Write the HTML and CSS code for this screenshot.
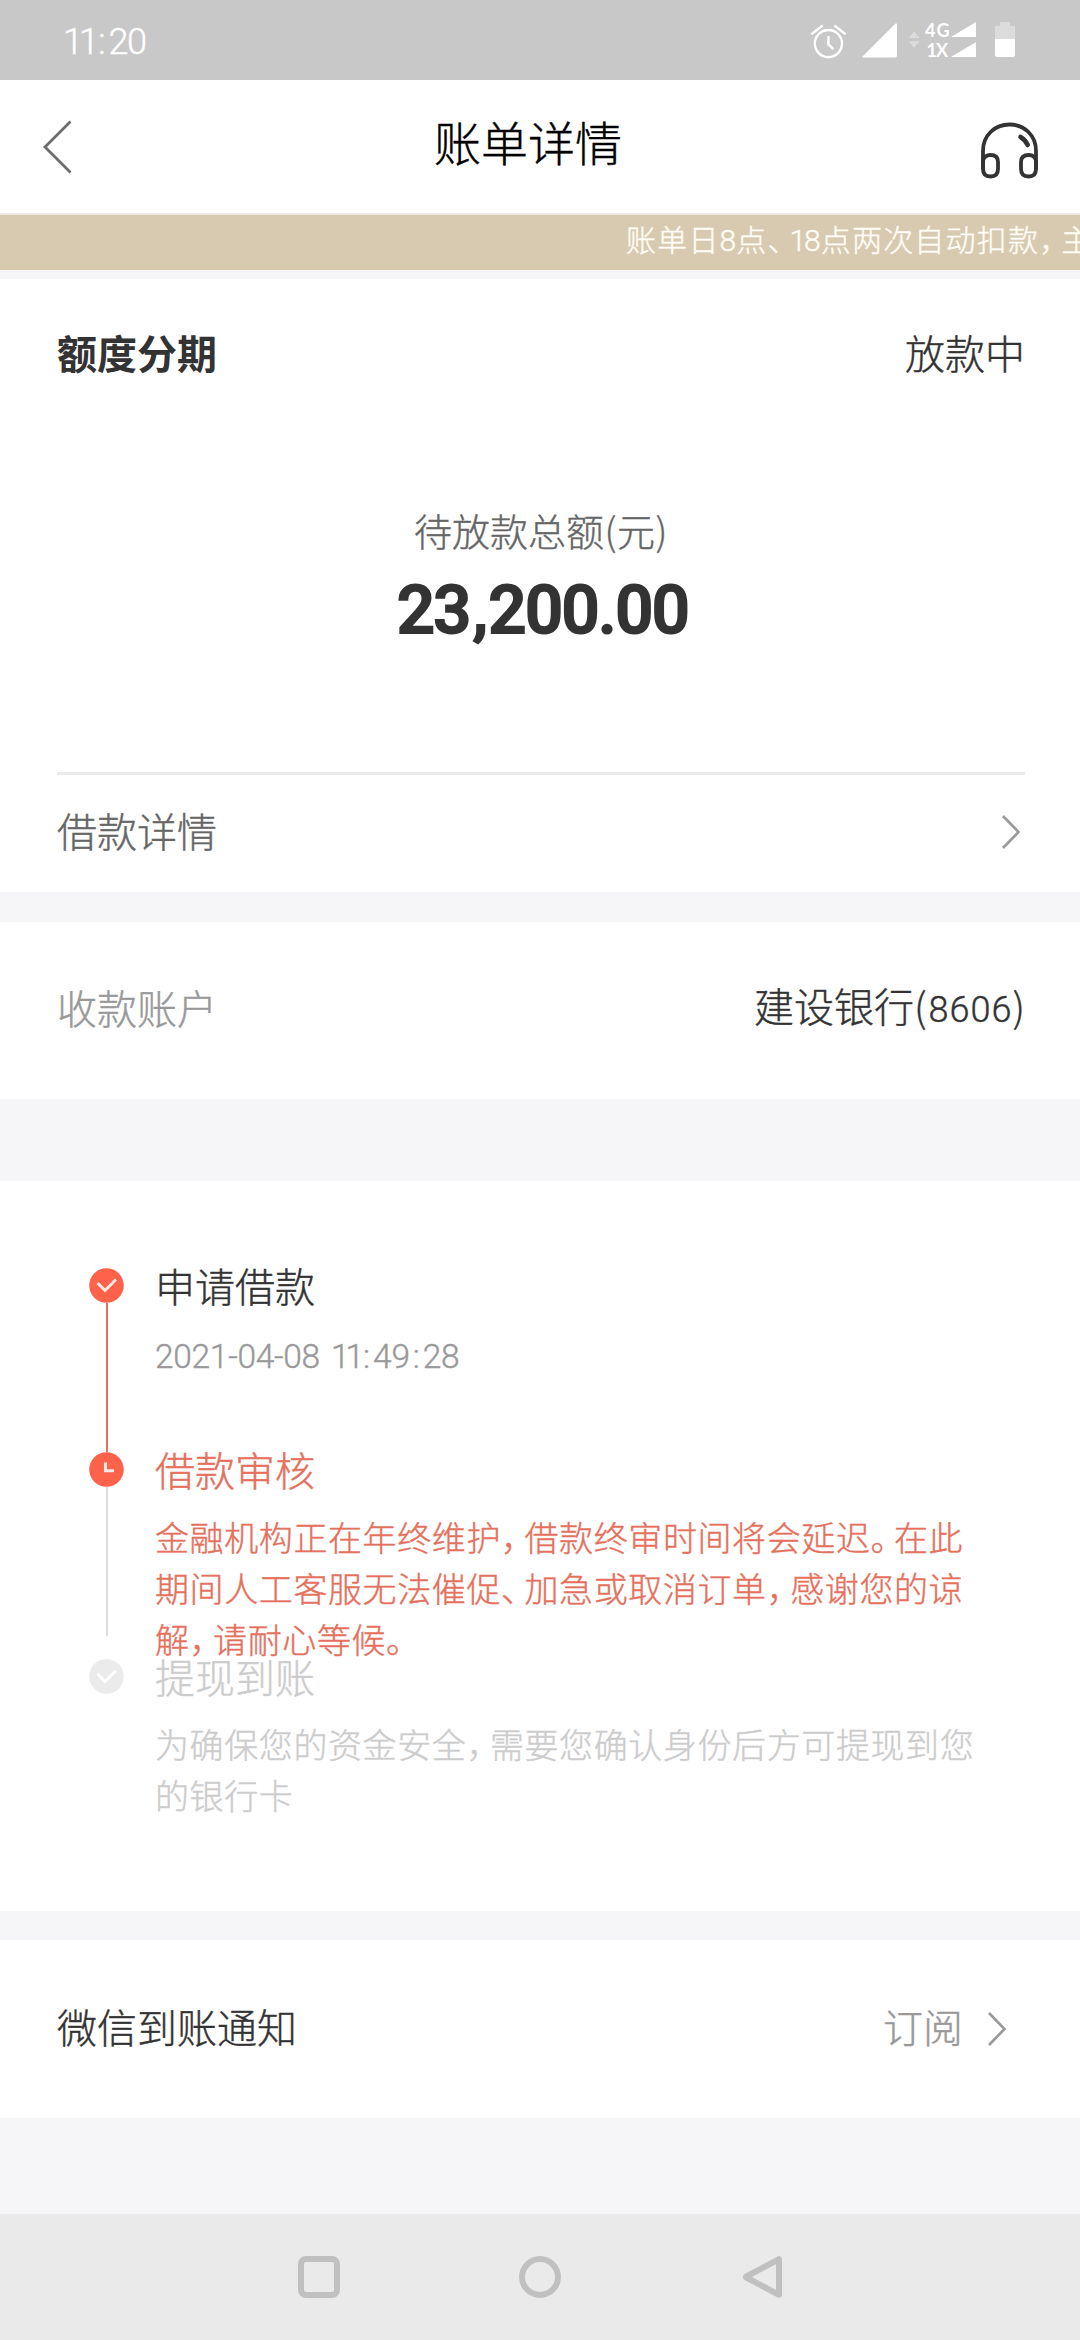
FILE: index.html
```
<!DOCTYPE html>
<html lang="zh-CN">
<head>
<meta charset="utf-8">
<title>账单详情</title>
<link rel="stylesheet" href="styles.css">
</head>
<body>
<div class="screen">
  <div class="status">
    <div class="clock"><span class="ones">11</span><span class="colon">:</span><span>20</span></div>
    <svg class="status-icons" width="208" height="40" viewBox="810 20 208 40">
      <g fill="none" stroke="#fff" stroke-width="2.4">
        <circle cx="828.4" cy="43.6" r="13.6"/>
        <path d="M828.4 36v8.4l5 4.8" />
        <path d="M811.4 34.2l11.4-8.8M845.6 34.2l-11.4-8.8"/>
      </g>
      <path d="M862 57L895.500 23.500Q897 22.500 897 25V55.500Q897 57.500 895 57.500H862.600Z" fill="#fff"/>
      <path d="M908.500 38l5.500-6.500 5.500 6.500zM908.500 41.200l5.500 6.500 5.500-6.500z" fill="#dcdcdc"/>
      <text class="net" x="925" y="37" textLength="24.500">4G</text>
      <text class="net" x="926.500" y="57" textLength="21.500">1X</text>
      <path d="M951 37l25-15v15zM951 57l25-15v15z" fill="#fff"/>
      <path d="M995 39V26h5v-4h10v4h5v13z" fill="#dcdcdc"/>
      <path d="M995 39h20v16q0 2-2 2h-16q-2 0-2-2z" fill="#fff"/>
    </svg>
  </div>

  <div class="header">
    <svg class="back" width="32" height="54" viewBox="0 0 32 54"><path d="M28.500 1.500L3 27l25.500 25.500" fill="none" stroke="#6c6c6c" stroke-width="2.800"/></svg>
    <h1>账单详情</h1>
    <svg class="service" width="60" height="60" viewBox="0 0 60 60">
      <g fill="none" stroke="#333" stroke-width="3.800">
        <path d="M3 48V30C3 14 15 3.500 29.500 3.500S56 14 56 30v18"/>
        <path d="M3 39.500q1.500-5.500 7.500-5.500 7.500 0 7.500 7v7q0 7.500-7.500 7.500T3 48zM56 39.500Q54.500 34 49 34q-8 0-8 7v7q0 7.500 7.500 7.500T56 48z"/>
        <path d="M40.500 16q5 3 7.200 8" stroke-width="4.600" stroke-linecap="round"/>
      </g>
    </svg>
  </div>

  <div class="marquee"><p>账单日<span class="n">8</span>点<span class="p">、</span><span class="n n18">18</span>点两次自动扣款<span class="p">，</span>主动还款请提前操作</p></div>

  <section class="card loan">
    <div class="row loan-head"><h2>额度分期</h2><span class="dark">放款中</span></div>
    <div class="sum-label">待放款总额<span class="paren">(</span>元<span class="paren">)</span></div>
    <div class="sum">23<span class="comma">,</span>200.00</div>
    <div class="row detail">
      <span class="mid">借款详情</span>
      <svg class="go" width="20" height="36" viewBox="0 0 20 36"><path d="M2 2l15.500 16L2 34" fill="none" stroke="#999" stroke-width="2.600"/></svg>
    </div>
  </section>

  <section class="card row account">
    <span class="light">收款账户</span><span class="dark bank">建设银行<span class="open">(</span><span class="code">8606</span>)</span>
  </section>

  <section class="card timeline">
    <div class="step s1">
      <div class="rail">
        <svg width="35" height="35" viewBox="0 0 35 35"><circle cx="17.500" cy="17.500" r="17.300" fill="#ff624b"/><path d="M8.500 15l7.500 7.500 11-11" fill="none" stroke="#ffe9e4" stroke-width="3"/></svg>
        <i class="line red"></i>
      </div>
      <div class="text"><h3>申请借款</h3><time>2021-04-08<span class="gap"></span><span class="ones">11</span><span class="colon">:</span>49<span class="colon">:</span>28</time></div>
    </div>
    <div class="step s2">
      <div class="rail">
        <svg width="35" height="35" viewBox="0 0 35 35"><circle cx="17.500" cy="17.500" r="17.300" fill="#ff624b"/><path d="M16.500 10.500v8.300h8.500" fill="none" stroke="#ffe9e4" stroke-width="3"/></svg>
        <i class="line"></i>
      </div>
      <div class="text"><h3>借款审核</h3>
        <p>金融机构正在年终维护<span class="p">，</span>借款终审时间将会延迟<span class="p">。</span>在此<br>期间人工客服无法催促<span class="p">、</span>加急或取消订单<span class="p">，</span>感谢您的谅<br>解<span class="p">，</span>请耐心等候<span class="p">。</span></p></div>
    </div>
    <div class="step s3">
      <div class="rail">
        <svg width="35" height="35" viewBox="0 0 35 35"><circle cx="17.500" cy="17.500" r="17.300" fill="#ebebeb"/><path d="M8.500 15l7.500 7.500 11-11" fill="none" stroke="#fff" stroke-width="3"/></svg>
      </div>
      <div class="text"><h3>提现到账</h3>
        <p>为确保您的资金安全<span class="p">，</span>需要您确认身份后方可提现到您<br>的银行卡</p></div>
    </div>
  </section>

  <section class="card row notify">
    <span class="dark">微信到账通知</span>
    <span class="sub"><span class="light">订阅</span>
    <svg width="20" height="36" viewBox="0 0 20 36"><path d="M2 2l15.500 16L2 34" fill="none" stroke="#999" stroke-width="2.600"/></svg></span>
  </section>

  <nav class="nav">
    <svg width="42" height="42" viewBox="0 0 42 42"><rect x="3" y="3" width="36" height="36" rx="5"/></svg>
    <svg width="42" height="42" viewBox="0 0 42 42"><circle cx="21" cy="21" r="18"/></svg>
    <svg width="42" height="42" viewBox="0 0 42 42"><path d="M39 3.200v35.600L6.300 21.500q-.8-.5 0-1z"/></svg>
  </nav>
</div>
</body>
</html>
```
FILE: styles.css
```
* { box-sizing: border-box; margin: 0; padding: 0; }
body {
  width: 1080px;
  font-family: "Noto Sans CJK SC", sans-serif;
  font-weight: 300;
  -webkit-text-stroke: .4px currentColor;
  background: #f6f6f8;
  color: #333;
}
svg { display: block; flex: none; -webkit-text-stroke: 0; }
h1, h2, h3 { font-weight: 300; }

.screen { height: 2340px; display: flex; flex-direction: column; overflow: hidden; }

.status {
  height: 80px;
  padding: 0 62px 0 63px;
  display: flex;
  justify-content: space-between;
  align-items: center;
  background: #c8c8c8;
}
.clock { color: #fff; font: 300 36px/80px Roboto, sans-serif; padding-top: 3px; letter-spacing: -1.500px; }
.ones { letter-spacing: -4px; }
.colon { letter-spacing: 3px; margin-left: 3px; }
.net { fill: #fff; font: 700 18px Lato, sans-serif; }

.header {
  height: 135px;
  padding: 0 40px 2px 42px;
  display: flex;
  justify-content: space-between;
  align-items: center;
  background: #fff;
  border-bottom: 2px solid #ebe8e3;
}
.back { margin-top: 2px; }
.header h1 { font-size: 47px; line-height: 60px; color: #000; padding-bottom: 9px; margin-left: 2px; }
.service { margin-top: 11px; }

.marquee { height: 55px; padding-left: 626px; background: #d8cab0; overflow: hidden; }
.marquee p { font-size: 30px; line-height: 47px; letter-spacing: 1.2px; color: #fffdf5; white-space: nowrap; }
.n { font-family: Roboto, sans-serif; letter-spacing: 0; }
.n18 { letter-spacing: -2px; margin-right: 2px; }
.marquee .p { letter-spacing: -8px; }

.card { background: #fff; font-size: 40px; line-height: 60px; }
.row { display: flex; justify-content: space-between; align-items: center; padding: 0 55px 0 57px; }
.dark { color: #333; }
.mid { color: #666; }
.light { color: #999; }

.loan { height: 613px; margin-top: 9px; }
.loan-head { padding-top: 43px; }
.loan h2 { font-size: 40px; font-weight: 700; -webkit-text-stroke: 0; }
.sum-label { margin-top: 120px; padding-left: 2px; text-align: center; font-size: 38px; line-height: 56px; color: #666; }
.paren { margin: 0 .5px; }
.sum {
  margin-top: 12px;
  padding-left: 5px;
  text-align: center;
  font: 500 67px/80px Roboto, sans-serif;
  letter-spacing: -1.500px;
  -webkit-text-stroke: 2px #333;
}
.comma { margin: 0 2px 0 3px; }
.detail { margin: 122px 55px 0 57px; padding: 0 4px 5px 0; height: 117px; border-top: 3px solid #ebebeb; }
.go { margin-top: 5px; }

.account { height: 177px; margin-top: 30px; padding-bottom: 7px; }
.open { margin-right: 2px; }
.code { font-family: Roboto, sans-serif; font-size: 36px; letter-spacing: 1px; }

.timeline { height: 730px; margin-top: 82px; padding: 75px 0 0 89px; }
.step { display: flex; gap: 31px; }
.rail { width: 35px; padding-top: 12px; display: flex; flex-direction: column; align-items: center; }
.line { flex: none; width: 2px; height: 149px; background: #ddd; }
.line.red { background: #e2705c; }
.step h3 { font-size: 40px; line-height: 58px; }
.s1 { height: 184px; }
.s2 { height: 207px; }
.s2 .text { color: #e5705c; }
.s3 .text { color: #ccc; }
.step time { display: block; margin-top: 15px; font: 300 33.500px/56px Roboto, sans-serif; letter-spacing: -.3px; color: #999; }
.gap { display: inline-block; width: 11px; }
.step p { font-size: 34px; line-height: 51px; letter-spacing: .6px; margin-top: 13px; white-space: nowrap; }
.step .p { letter-spacing: -10.500px; }

.notify { height: 178px; margin-top: 29px; padding-bottom: 6px; }
.sub { display: flex; align-items: center; gap: 24px; padding-right: 18px; }
.sub svg { margin-top: 5px; }

.nav { height: 126px; margin-top: auto; display: flex; justify-content: center; align-items: center; gap: 179px; background: #eaeaea; }
.nav svg { fill: none; stroke: #c0c0c0; stroke-width: 6; stroke-linejoin: round; }
```
